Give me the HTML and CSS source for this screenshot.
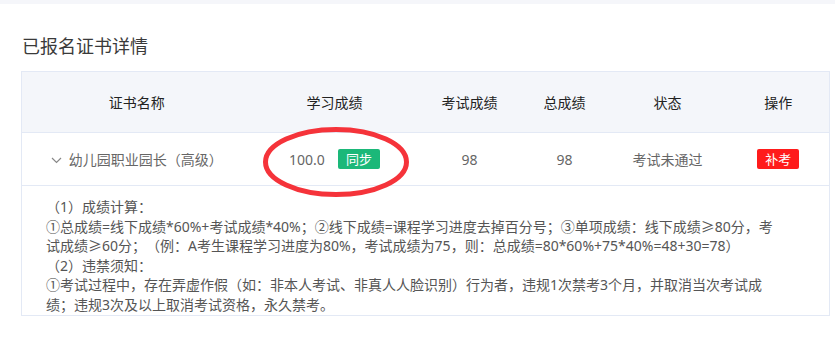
FILE: index.html
```html
<!DOCTYPE html>
<html lang="zh-CN">
<head>
<meta charset="utf-8">
<title>已报名证书详情</title>
<link rel="stylesheet" href="styles.css">
</head>
<body>
<div class="topbar"></div>
<div class="main">
    <h2 class="title">已报名证书详情</h2>
    <div class="cert-wrap">
        <table class="cert-table">
            <colgroup>
                <col style="width:230px">
                <col style="width:166px">
                <col style="width:104px">
                <col style="width:86px">
                <col style="width:120px">
                <col>
            </colgroup>
            <thead>
                <tr>
                    <th>证书名称</th>
                    <th>学习成绩</th>
                    <th>考试成绩</th>
                    <th>总成绩</th>
                    <th>状态</th>
                    <th>操作</th>
                </tr>
            </thead>
            <tbody>
                <tr class="cert-row">
                    <td>
                        <span class="arrow"><svg width="11" height="7" viewBox="0 0 11 7"><polyline points="1,1 5.5,5.5 10,1" fill="none" stroke="#888" stroke-width="1.2"/></svg></span>幼儿园职业园长（高级）
                    </td>
                    <td>100.0<a class="btn btn-green" href="javascript:void(0)">同步</a></td>
                    <td>98</td>
                    <td>98</td>
                    <td>考试未通过</td>
                    <td><a class="btn btn-red" href="javascript:void(0)">补考</a></td>
                </tr>
                <tr>
                    <td class="notes" colspan="6">
                        （1）成绩计算：<br>
                        ①总成绩=线下成绩*60%+考试成绩*40%；②线下成绩=课程学习进度去掉百分号；③单项成绩：线下成绩≥80分，考试成绩≥60分；（例：A考生课程学习进度为80%，考试成绩为75，则：总成绩=80*60%+75*40%=48+30=78）<br>
                        （2）违禁须知：<br>
                        ①考试过程中，存在弄虚作假（如：非本人考试、非真人人脸识别）行为者，违规1次禁考3个月，并取消当次考试成绩；违规3次及以上取消考试资格，永久禁考。
                    </td>
                </tr>
            </tbody>
        </table>
        <!-- 标注圈 -->
        <svg class="mark" width="150" height="74" viewBox="0 0 150 74"><ellipse cx="75" cy="37" rx="70.5" ry="32.5" fill="none" stroke="#f5333a" stroke-width="5"/></svg>
    </div>
</div>
</body>
</html>
```

FILE: styles.css
```css
body,h2,table,th,td{ margin:0; padding:0;}
a{ text-decoration:none;}
body{ background:#fff; font-family:"Noto Sans","Noto Sans CJK SC",sans-serif; color:#555; text-spacing-trim:space-all;}
.topbar{ height:4px; background:#f5f6fa;}
.main{ padding:0 5px 0 21px;}
.title{ margin:30px 0 13px 1px; font-size:18px; line-height:24px; font-weight:normal; color:#3a3a3a;}
.cert-wrap{ position:relative;}
.cert-table{ width:100%; border-collapse:collapse; border:1px solid #e3e9f5; table-layout:fixed;}
.cert-table th{ height:60px; background:#f4f6fa; font-size:14px; font-weight:normal; color:#222; text-align:center; border-bottom:1px solid #e3e9f5; padding:0;}
.cert-row td{ height:52px; font-size:14px; color:#666; text-align:center; border-bottom:1px solid #e3e9f5; white-space:nowrap;}
.arrow{ display:inline-block; margin-right:7px; vertical-align:1px;}
.btn{ display:inline-block; width:42px; height:20px; line-height:20px; border-radius:2px; color:#fff; font-size:13px; text-align:center; vertical-align:1px;}
.btn-green{ background:#1bb879; margin-left:13px;}
.btn-red{ background:#ff1b1b;}
.notes{ padding:11px 46px 0 24px; font-size:14px; line-height:19.6px; color:#555;}
.mark{ position:absolute; left:240px; top:54px;}
```
